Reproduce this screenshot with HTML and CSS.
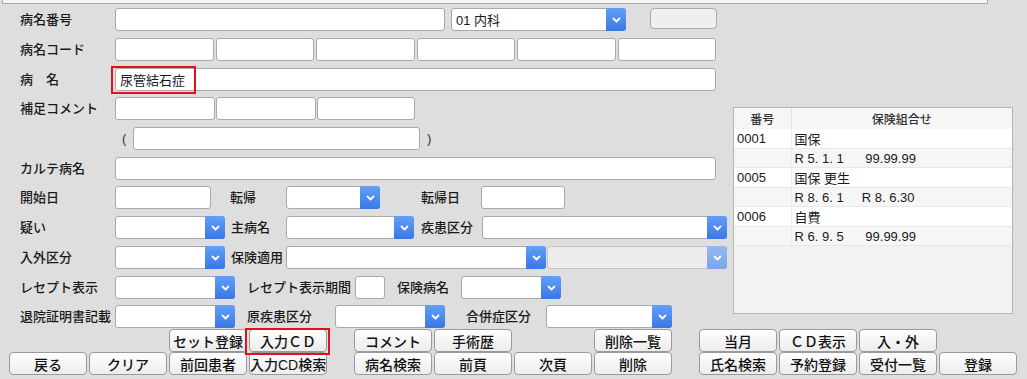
FILE: index.html
```html
<!DOCTYPE html>
<html lang="ja">
<head>
    <meta charset="UTF-8">
    <title>病名登録</title>
    <link rel="stylesheet" href="styles.css">
</head>
<body>
    <div class="top-strip"></div>

    <div class="screen">
        <!-- 入力フォーム -->
        <div class="form">
            <div class="row">
                <span class="lbl">病名番号</span>
                <div class="field w330"></div>
                <div class="sel w175 ml6"><span class="val">01 内科</span><span class="arrow"><svg width="9" height="6" viewBox="0 0 9 6"><polyline points="1.5,1.5 4.5,4.5 7.5,1.5" /></svg></span></div>
                <div class="mini-btn"></div>
            </div>
            <div class="row">
                <span class="lbl">病名コード</span>
                <div class="code-grid">
                    <div class="field"></div><div class="field"></div><div class="field"></div>
                    <div class="field"></div><div class="field"></div><div class="field"></div>
                </div>
            </div>
            <div class="row">
                <span class="lbl">病　名</span>
                <div class="field w601 marked"><span class="val">尿管結石症</span><span class="mark"></span></div>
            </div>
            <div class="row">
                <span class="lbl">補足コメント</span>
                <div class="field w100"></div>
                <div class="field w100 ml1"></div>
                <div class="field w98 ml1"></div>
            </div>
            <div class="row">
                <span class="lbl"></span>
                <span class="paren open">(</span>
                <div class="field w287"></div>
                <span class="paren close">)</span>
            </div>
            <div class="row">
                <span class="lbl">カルテ病名</span>
                <div class="field w601"></div>
            </div>
            <div class="row">
                <span class="lbl">開始日</span>
                <div class="field w96"></div>
                <span class="sub" style="margin-left:19px;width:56px">転帰</span>
                <div class="sel w94"><span class="val"></span><span class="arrow"><svg width="9" height="6" viewBox="0 0 9 6"><polyline points="1.5,1.5 4.5,4.5 7.5,1.5" /></svg></span></div>
                <span class="sub" style="margin-left:41px;width:60px">転帰日</span>
                <div class="field w84"></div>
            </div>
            <div class="row">
                <span class="lbl">疑い</span>
                <div class="sel w110"><span class="val"></span><span class="arrow"><svg width="9" height="6" viewBox="0 0 9 6"><polyline points="1.5,1.5 4.5,4.5 7.5,1.5" /></svg></span></div>
                <span class="sub" style="margin-left:6px;width:55px">主病名</span>
                <div class="sel w128"><span class="val"></span><span class="arrow"><svg width="9" height="6" viewBox="0 0 9 6"><polyline points="1.5,1.5 4.5,4.5 7.5,1.5" /></svg></span></div>
                <span class="sub" style="margin-left:7px;width:61px">疾患区分</span>
                <div class="sel w245"><span class="val"></span><span class="arrow"><svg width="9" height="6" viewBox="0 0 9 6"><polyline points="1.5,1.5 4.5,4.5 7.5,1.5" /></svg></span></div>
            </div>
            <div class="row">
                <span class="lbl">入外区分</span>
                <div class="sel w110"><span class="val"></span><span class="arrow"><svg width="9" height="6" viewBox="0 0 9 6"><polyline points="1.5,1.5 4.5,4.5 7.5,1.5" /></svg></span></div>
                <span class="sub" style="margin-left:6px;width:55px">保険適用</span>
                <div class="sel w260"><span class="val"></span><span class="arrow"><svg width="9" height="6" viewBox="0 0 9 6"><polyline points="1.5,1.5 4.5,4.5 7.5,1.5" /></svg></span></div>
                <div class="sel w180 ml1 disabled"><span class="val"></span><span class="arrow"><svg width="9" height="6" viewBox="0 0 9 6"><polyline points="1.5,1.5 4.5,4.5 7.5,1.5" /></svg></span></div>
            </div>
            <div class="row">
                <span class="lbl">レセプト表示</span>
                <div class="sel w120"><span class="val"></span><span class="arrow"><svg width="9" height="6" viewBox="0 0 9 6"><polyline points="1.5,1.5 4.5,4.5 7.5,1.5" /></svg></span></div>
                <span class="sub" style="margin-left:12px;width:108px">レセプト表示期間</span>
                <div class="field w30"></div>
                <span class="sub" style="margin-left:12px;width:64px">保険病名</span>
                <div class="sel w100"><span class="val"></span><span class="arrow"><svg width="9" height="6" viewBox="0 0 9 6"><polyline points="1.5,1.5 4.5,4.5 7.5,1.5" /></svg></span></div>
            </div>
            <div class="row">
                <span class="lbl">退院証明書記載</span>
                <div class="sel w120"><span class="val"></span><span class="arrow"><svg width="9" height="6" viewBox="0 0 9 6"><polyline points="1.5,1.5 4.5,4.5 7.5,1.5" /></svg></span></div>
                <span class="sub" style="margin-left:12px;width:88px">原疾患区分</span>
                <div class="sel w110"><span class="val"></span><span class="arrow"><svg width="9" height="6" viewBox="0 0 9 6"><polyline points="1.5,1.5 4.5,4.5 7.5,1.5" /></svg></span></div>
                <span class="sub" style="margin-left:21px;width:80px">合併症区分</span>
                <div class="sel w126"><span class="val"></span><span class="arrow"><svg width="9" height="6" viewBox="0 0 9 6"><polyline points="1.5,1.5 4.5,4.5 7.5,1.5" /></svg></span></div>
            </div>
        </div>

        <!-- 保険組合せ一覧 -->
        <div class="side">
            <div class="ins-box">
                <table class="ins-table">
                    <thead>
                        <tr><th class="col-no">番号</th><th>保険組合せ</th></tr>
                    </thead>
                    <tbody>
                        <tr><td>0001</td><td>国保</td></tr>
                        <tr class="sub-row"><td></td><td class="pre">R 5. 1. 1      99.99.99</td></tr>
                        <tr><td>0005</td><td>国保 更生</td></tr>
                        <tr class="sub-row"><td></td><td class="pre">R 8. 6. 1     R 8. 6.30</td></tr>
                        <tr><td>0006</td><td>自費</td></tr>
                        <tr class="sub-row"><td></td><td class="pre">R 6. 9. 5      99.99.99</td></tr>
                    </tbody>
                </table>
            </div>
        </div>
    </div>

    <!-- ファンクションボタン -->
    <div class="btnbar">
        <div class="btn-group">
            <span></span>
            <span></span>
            <button class="btn">セット登録</button>
            <button class="btn marked-btn">入力ＣＤ<span class="mark"></span></button>
            <button class="btn">戻る</button>
            <button class="btn">クリア</button>
            <button class="btn">前回患者</button>
            <button class="btn">入力CD検索</button>
        </div>
        <div class="btn-group g2">
            <button class="btn">コメント</button>
            <button class="btn">手術歴</button>
            <span></span>
            <button class="btn">削除一覧</button>
            <button class="btn">病名検索</button>
            <button class="btn">前頁</button>
            <button class="btn">次頁</button>
            <button class="btn">削除</button>
        </div>
        <div class="btn-group g3">
            <button class="btn">当月</button>
            <button class="btn">ＣＤ表示</button>
            <button class="btn">入・外</button>
            <span></span>
            <button class="btn">氏名検索</button>
            <button class="btn">予約登録</button>
            <button class="btn">受付一覧</button>
            <button class="btn">登録</button>
        </div>
    </div>
</body>
</html>
```

FILE: styles.css
```css
/* ========== 変数 ========== */
:root {
    --bg: #dedede;
    --line: #a9a9a9;
    --text: #1a1a1a;
    --blue-top: #62a0f8;
    --blue-bottom: #3a76e6;
    --mark: #e3111b;
    --row-h: 23px;
}

/* ========== 基本 ========== */
* {
    margin: 0;
    padding: 0;
    box-sizing: border-box;
}

body {
    background: var(--bg);
    color: var(--text);
    font-family: "Liberation Sans", "Noto Sans CJK JP", sans-serif;
    font-size: 13px;
    width: 1027px;
    height: 379px;
    overflow: hidden;
}

.top-strip {
    margin-left: 2px;
    width: 986px;
    height: 4px;
    background: #f4f4f4;
    border: 1px solid #a8a8a8;
    border-top: 0;
}

.screen {
    display: flex;
    margin-top: 4px;
}

/* ========== フォーム ========== */
.form {
    width: 733px;
    display: grid;
    grid-template-rows: 30px 30px 29px 30px 30px 29px 30px 30px 30px 29px 23px;
}

.row {
    display: flex;
    align-items: center;
    height: var(--row-h);
    padding-left: 20px;
}

.lbl,
.sub {
    flex: none;
    white-space: nowrap;
    line-height: var(--row-h);
    font-weight: 500;
}

.lbl {
    width: 95px;
}

.field {
    position: relative;
    height: var(--row-h);
    background: #fff;
    border: 1px solid var(--line);
    border-radius: 3px;
    flex: none;
    display: flex;
    align-items: center;
}

.field .val,
.sel .val {
    padding-left: 4px;
    white-space: nowrap;
}

.sel {
    height: var(--row-h);
    display: flex;
    align-items: center;
    background: #fff;
    border: 1px solid var(--line);
    border-radius: 3px;
    flex: none;
}

.sel .arrow {
    margin: -1px -1px -1px auto;
    width: 20px;
    align-self: stretch;
    display: flex;
    align-items: center;
    justify-content: center;
    background: linear-gradient(var(--blue-top), var(--blue-bottom));
    border-radius: 0 3px 3px 0;
}

.sel .arrow polyline {
    fill: none;
    stroke: #fff;
    stroke-width: 1.8;
    stroke-linecap: round;
    stroke-linejoin: round;
}

.sel.disabled {
    background: #ececec;
    border-color: #c4c4c4;
}

.sel.disabled .arrow {
    background: linear-gradient(#93b8f3, #7aa5ec);
}

.code-grid {
    display: grid;
    grid-template-columns: repeat(6, 1fr);
    column-gap: 2px;
    width: 601px;
}

.mini-btn {
    margin-left: 24px;
    width: 67px;
    height: 21px;
    align-self: flex-start;
    background: #efefef;
    border: 1px solid var(--line);
    border-radius: 4px;
}

.paren {
    width: 18px;
    flex: none;
    font-size: 13px;
    color: #333;
}

.paren.open { margin-left: 7px; width: 11px; }
.paren.close { margin-left: 7px; }

/* 幅 */
.w30 { width: 30px; }
.w84 { width: 84px; }
.w94 { width: 94px; }
.w96 { width: 96px; }
.w98 { width: 98px; }
.w100 { width: 100px; }
.w110 { width: 110px; }
.w120 { width: 120px; }
.w126 { width: 126px; }
.w128 { width: 128px; }
.w175 { width: 175px; }
.w180 { width: 180px; }
.w245 { width: 245px; }
.w260 { width: 260px; }
.w287 { width: 287px; }
.w330 { width: 330px; }
.w601 { width: 601px; }
.ml1 { margin-left: 1px; }
.ml6 { margin-left: 6px; }

/* 赤枠 */
.mark {
    position: absolute;
    border: 2px solid var(--mark);
    pointer-events: none;
}

.field.marked .mark {
    left: -5px;
    top: -3px;
    width: 85px;
    height: 28px;
}

/* ========== 保険組合せ ========== */
.side {
    padding-top: 99px;
}

.ins-box {
    width: 280px;
    height: 207px;
    background: #f2f2f2;
    border: 1px solid #b4b4b4;
}

.ins-table {
    width: 100%;
    border-collapse: collapse;
    table-layout: fixed;
}

.ins-table th {
    height: 21px;
    font-size: 12px;
    font-weight: 500;
    color: #333;
    background: #f6f6f6;
    border-left: 1px solid #e4e4e4;
    text-align: center;
}

.ins-table th.col-no {
    width: 57px;
    border-left: 0;
}

.ins-table td {
    height: 19px;
    padding: 0 3px;
    background: #fff;
    border-bottom: 1px solid #e8e8e8;
    white-space: nowrap;
}

.ins-table td + td {
    border-left: 1px solid #ececec;
}

.ins-table .sub-row td {
    background: #f6f6f6;
}

.ins-table .pre {
    white-space: pre;
}

/* ========== ボタン ========== */
.btnbar {
    display: flex;
    padding-left: 9px;
    margin-top: 1px;
}

.btn-group {
    display: grid;
    grid-template-columns: repeat(4, 78px);
    grid-auto-rows: 23px;
    column-gap: 2px;
}

.btn-group.g2 { margin-left: 27px; }
.btn-group.g3 { margin-left: 27px; }

.btn {
    font-family: "Liberation Sans", "Noto Sans CJK JP", sans-serif;
    font-size: 14px;
    font-weight: 500;
    color: #111;
    background: linear-gradient(#fefefe, #ececec);
    border: 1px solid #9a9a9a;
    border-radius: 4px;
    white-space: nowrap;
    padding: 0;
}

.marked-btn {
    position: relative;
    z-index: 1;
}

.marked-btn .mark {
    left: -5px;
    top: -2px;
    width: 85px;
    height: 27px;
}
```
